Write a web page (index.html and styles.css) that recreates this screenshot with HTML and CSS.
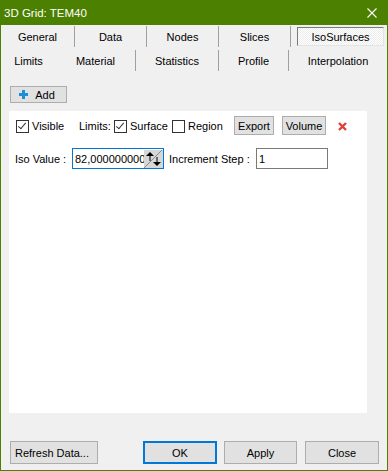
FILE: index.html
```html
<!DOCTYPE html>
<html lang="en">
  <head>
    <meta charset="UTF-8" />
    <link rel="stylesheet" href="styles.css">
    <title>3D Grid: TEM40</title>
  </head>
  <body>
    <div class="window">
      <div class="titleBar">
        <span class="titleText">3D Grid: TEM40</span>
        <svg class="titleClose" width="10" height="10" viewBox="0 0 10 10">
          <path d="M0.5 0.5 L9.5 9.5 M9.5 0.5 L0.5 9.5" stroke="#fff" stroke-width="1.1" fill="none" />
        </svg>
      </div>

      <div class="tabRow tabRowTop">
        <div class="tab">General</div>
        <div class="tab sep">Data</div>
        <div class="tab sep">Nodes</div>
        <div class="tab sep">Slices</div>
        <div class="tab sep"><span class="tabSelected">IsoSurfaces</span></div>
      </div>
      <div class="tabRow tabRowBottom">
        <div class="tab">Limits</div>
        <div class="tab">Material</div>
        <div class="tab sep">Statistics</div>
        <div class="tab sep">Profile</div>
        <div class="tab sep">Interpolation</div>
      </div>

      <div class="addBar">
        <button class="btn addButton">
          <svg width="9" height="9" viewBox="0 0 9 9">
            <path d="M3 0 H6 V3 H9 V6 H6 V9 H3 V6 H0 V3 H3 Z" fill="#1b8fd8" />
          </svg>
          <span>Add</span>
        </button>
      </div>

      <div class="panel">
        <div class="optionRow">
          <span class="checkbox checked"></span>
          <span class="chkLabel visibleLabel">Visible</span>
          <span class="limitsLabel">Limits:</span>
          <span class="checkbox checked"></span>
          <span class="chkLabel surfaceLabel">Surface</span>
          <span class="checkbox"></span>
          <span class="chkLabel regionLabel">Region</span>
          <button class="btn smallButton exportButton">Export</button>
          <button class="btn smallButton volumeButton">Volume</button>
          <svg class="deleteIcon" width="9" height="9" viewBox="0 0 9 9">
            <path d="M1 1 L8 8 M8 1 L1 8" stroke="#e0403c" stroke-width="2.4" fill="none" />
          </svg>
        </div>

        <div class="valueRow">
          <span class="isoLabel">Iso Value :</span>
          <div class="field isoField">
            <span class="fieldText">82,000000000</span>
            <svg class="spinner" width="19" height="18" viewBox="0 0 19 18">
              <rect x="0" y="0" width="19" height="18" fill="#d6d6d6" />
              <path d="M18 0 L0 18" stroke="#8a8a8a" stroke-width="1" />
              <path d="M2 6 L6 2 L10 6 Z" fill="#000" />
              <path d="M5.5 5 H6.5 V11 H5.5 Z" fill="#000" />
              <path d="M9 12 L13 16 L17 12 Z" fill="#000" />
              <path d="M12.5 7 H13.5 V13 H12.5 Z" fill="#000" />
            </svg>
          </div>
          <span class="stepLabel">Increment Step :</span>
          <div class="field stepField">
            <span class="fieldText">1</span>
          </div>
        </div>
      </div>

      <div class="footer">
        <button class="btn footButton refreshButton">Refresh Data...</button>
        <button class="btn footButton okButton">OK</button>
        <button class="btn footButton applyButton">Apply</button>
        <button class="btn footButton closeButton">Close</button>
      </div>
    </div>
  </body>
</html>
```

FILE: styles.css
```css
* {
  box-sizing: border-box;
}
body {
  margin: 0;
  background-color: #f0f0f0;
  font-family: "Liberation Sans", Arial, sans-serif;
  font-size: 11px;
  color: #000;
}
.window {
  width: 388px;
  height: 471px;
  border: 1px solid #4c8000;
  border-top: none;
  background-color: #f0f0f0;
  display: flex;
  flex-direction: column;
}
.titleBar {
  height: 25px;
  margin: 0 -1px;
  background-color: #4c8000;
  display: flex;
  align-items: center;
  padding: 0 11px 0 4px;
}
.titleText {
  color: #fff;
  font-size: 11.5px;
  flex: 1;
}
.titleClose {
  display: block;
}

/* tabs */
.tabRow {
  display: grid;
}
.tabRowTop {
  margin-top: 1px;
  height: 21px;
  grid-template-columns: 73px 72px 72px 72px 1fr;
}
.tabRowBottom {
  margin-top: 3px;
  height: 21px;
  grid-template-columns: 55px 79px 83px 70px 1fr;
}
.tab {
  display: flex;
  align-items: center;
  justify-content: center;
  white-space: nowrap;
}
.tab.sep {
  border-left: 1px solid #a0a0a0;
}
.tabSelected {
  display: flex;
  align-items: center;
  justify-content: center;
  align-self: stretch;
  flex: 1;
  margin: 1px 3px 1px 6px;
  border: 1px solid;
  border-color: #7a7a7a #e3e3e3 #e3e3e3 #7a7a7a;
  background: repeating-conic-gradient(#ffffff 0 25%, #ececec 0 50%) 0 0 / 2px 2px;
}

/* buttons */
.btn {
  font-family: inherit;
  font-size: 11px;
  color: #000;
  background-color: #e1e1e1;
  border: 1px solid #adadad;
  padding: 0;
  margin: 0;
  display: flex;
  align-items: center;
  justify-content: center;
}
.addBar {
  padding: 15px 0 0 9px;
}
.addButton {
  width: 57px;
  height: 17px;
  gap: 7px;
  padding-right: 3px;
}
.addButton svg {
  display: block;
}

/* white panel */
.panel {
  margin: 8px 0 0 8px;
  width: 358px;
  height: 302px;
  background-color: #fff;
  padding: 5px 0 0 7px;
}
.optionRow {
  display: flex;
  align-items: center;
  height: 19px;
}
.checkbox {
  flex: none;
  width: 13px;
  height: 13px;
  border: 1px solid #333;
  background-color: #fff;
  margin-top: 1px;
  position: relative;
}
.checkbox.checked::after {
  content: "";
  position: absolute;
  left: 3px;
  top: 0px;
  width: 3px;
  height: 7px;
  border: solid #333;
  border-width: 0 1px 1px 0;
  transform: rotate(40deg);
}
.chkLabel {
  margin-left: 3px;
  white-space: nowrap;
}
.visibleLabel {
  width: 47px;
}
.limitsLabel {
  width: 35px;
}
.surfaceLabel {
  width: 42px;
}
.regionLabel {
  width: 46px;
}
.smallButton {
  height: 19px;
}
.exportButton {
  width: 40px;
}
.volumeButton {
  width: 44px;
  margin-left: 8px;
}
.deleteIcon {
  margin: 2px 0 0 12px;
  display: block;
}

.valueRow {
  display: flex;
  align-items: center;
  margin-top: 13px;
  height: 21px;
  margin-left: -1px;
}
.isoLabel {
  width: 57px;
}
.field {
  height: 21px;
  border: 1px solid #7a7a7a;
  display: flex;
  align-items: center;
  overflow: hidden;
  position: relative;
}
.fieldText {
  padding-left: 2px;
  white-space: nowrap;
}
.isoField {
  width: 92px;
  border-color: #0078d7;
}
.spinner {
  position: absolute;
  right: 0;
  top: 1px;
  display: block;
}
.stepLabel {
  margin-left: 5px;
  width: 87px;
}
.stepField {
  width: 72px;
}

/* bottom buttons */
.footer {
  display: flex;
  padding: 28px 0 0 9px;
}
.footButton {
  height: 23px;
}
.refreshButton {
  width: 88px;
  justify-content: flex-start;
  padding-left: 4px;
}
.okButton {
  width: 74px;
  margin-left: 45px;
  border: 2px solid #0078d7;
}
.applyButton {
  width: 73px;
  margin-left: 7px;
}
.closeButton {
  width: 74px;
  margin-left: 8px;
}
```
